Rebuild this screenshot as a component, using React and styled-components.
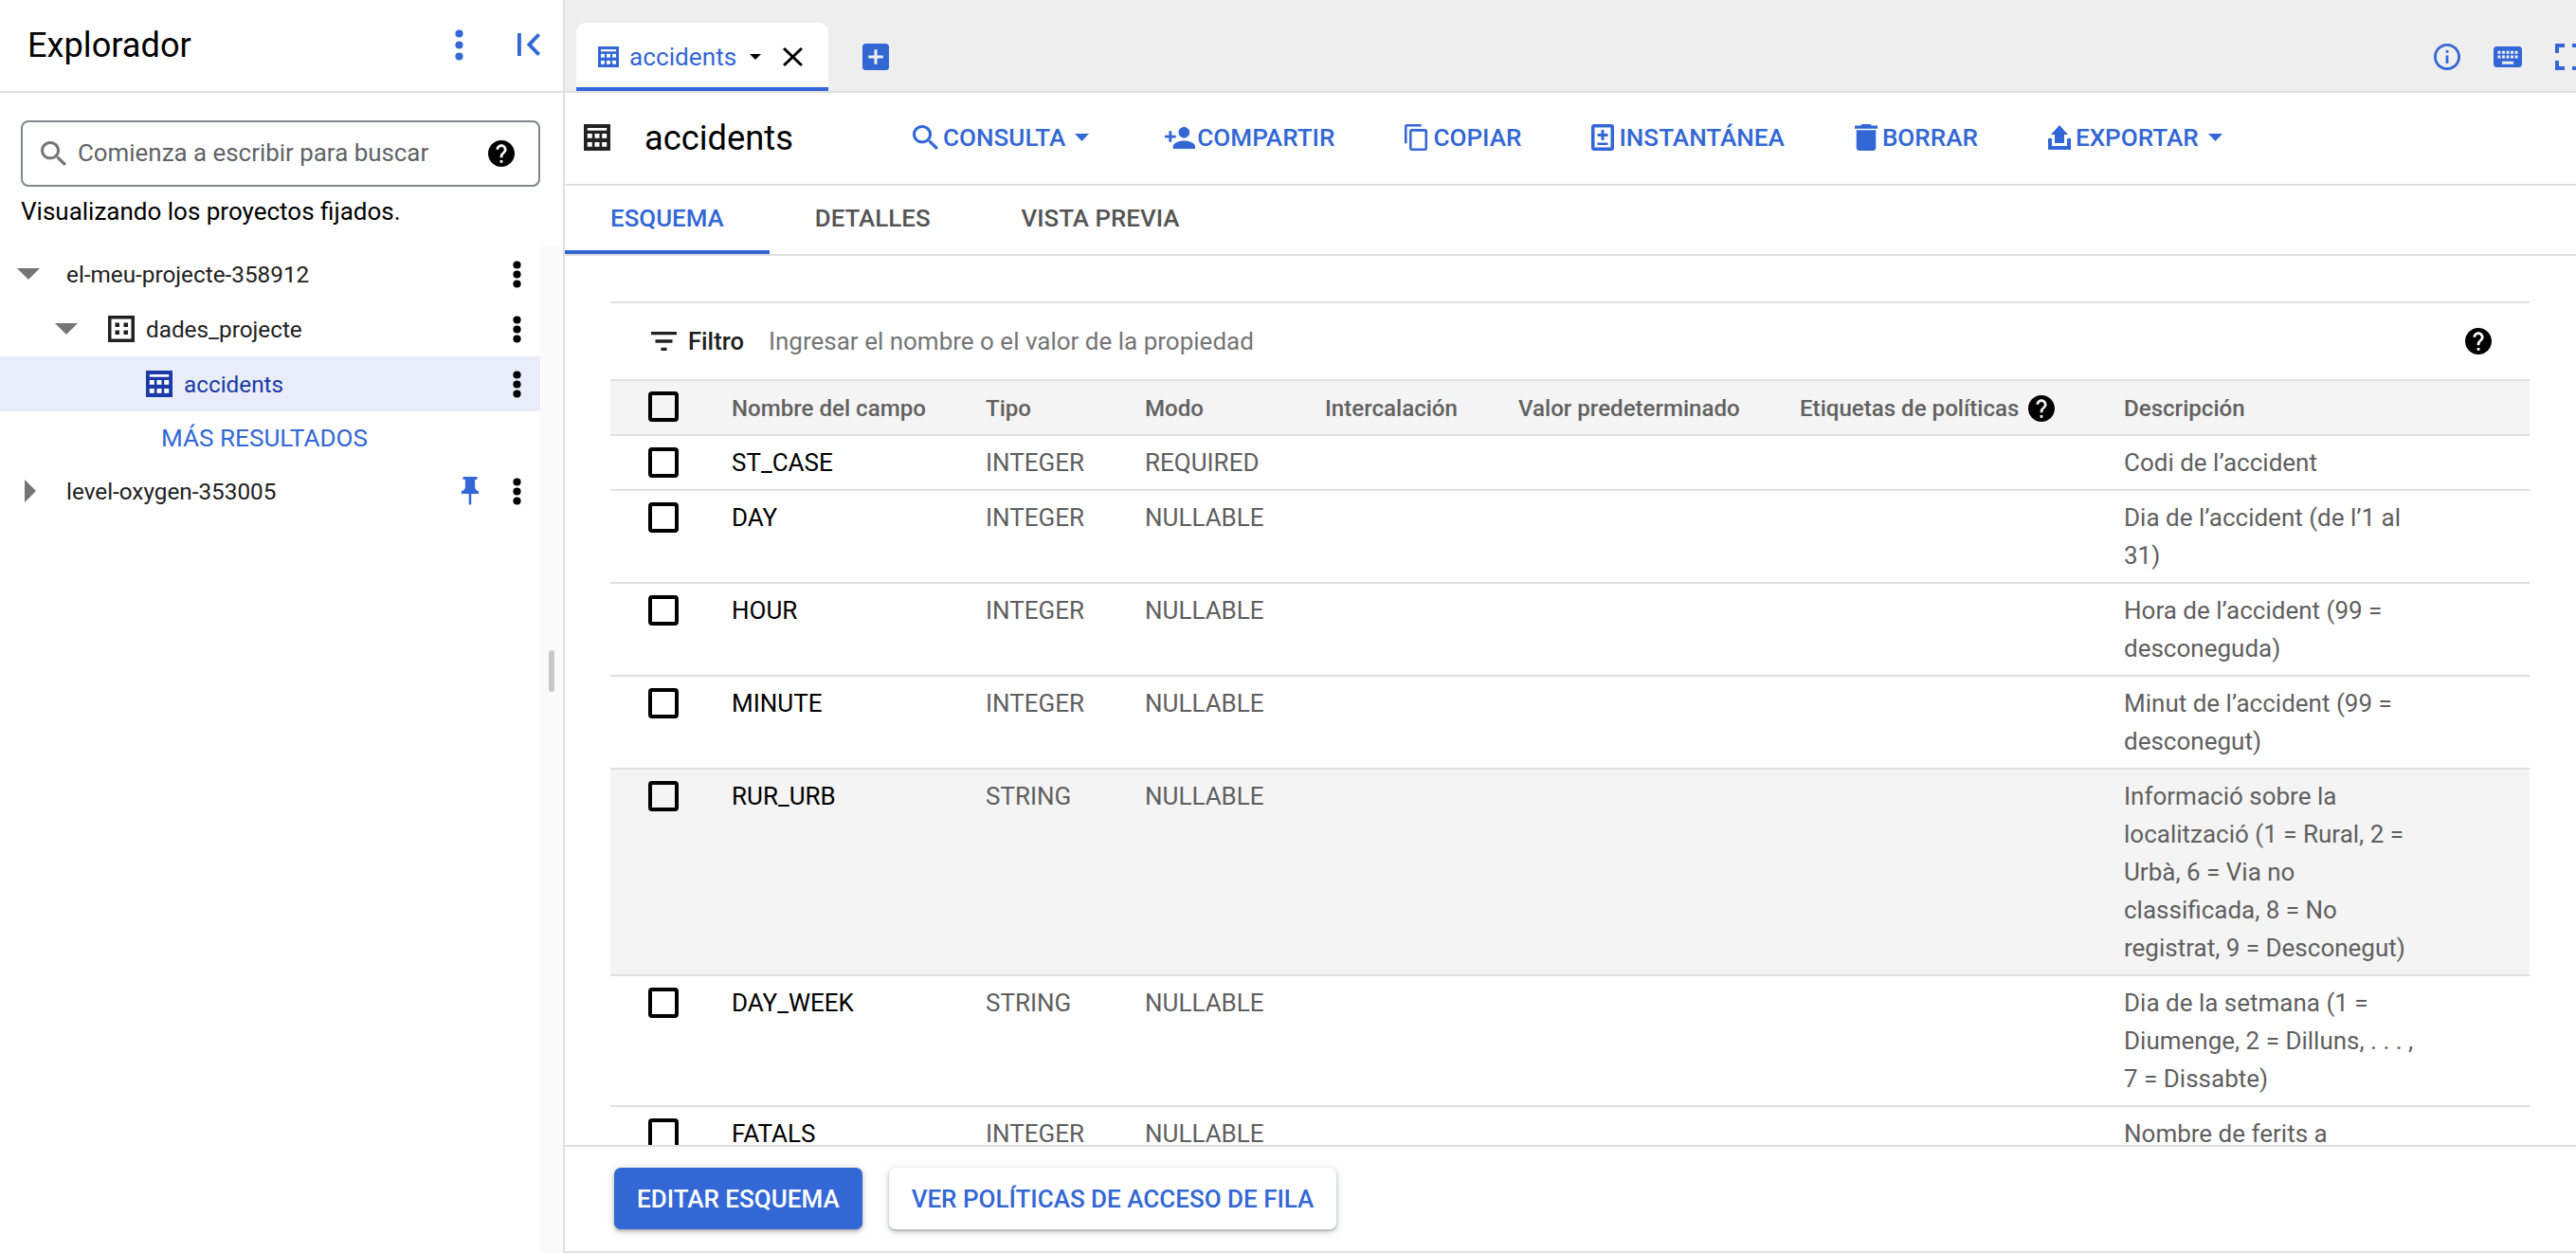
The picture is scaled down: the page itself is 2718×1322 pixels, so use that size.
import React from "react";
import styled, { createGlobalStyle } from "styled-components";

const BLUE = "#3367d6";
const LINE = "#e0e0e0";

const GlobalStyle = createGlobalStyle`
  html, body {
    margin: 0;
    padding: 0;
    overflow: hidden;
    background: #fff;
    font-family: Roboto, "Noto Sans", sans-serif;
  }
  * { box-sizing: border-box; }
`;

const Page = styled.div`
  display: flex;
  width: 2718px;
  height: 1322px;
  overflow: hidden;
  color: #212121;
`;

/* ---------- icons ---------- */

const PATHS = {
  search: ["3 3 17.49 17.49", "M15.5 14h-.79l-.28-.27C15.41 12.59 16 11.11 16 9.5 16 5.91 13.09 3 9.5 3S3 5.91 3 9.5 5.91 16 9.5 16c1.61 0 3.09-.59 4.23-1.57l.27.28v.79l5 4.99L20.49 19l-4.99-5zm-6 0C7.01 14 5 11.99 5 9.5S7.01 5 9.5 5 14 7.01 14 9.5 11.99 14 9.5 14z"],
  help: ["2 2 20 20", "M12 2C6.48 2 2 6.48 2 12s4.48 10 10 10 10-4.48 10-10S17.52 2 12 2zm1 17h-2v-2h2v2zm2.07-7.75l-.9.92C13.45 12.9 13 13.5 13 15h-2v-.5c0-1.1.45-2.1 1.17-2.83l1.24-1.26c.37-.36.59-.86.59-1.41 0-1.1-.9-2-2-2s-2 .9-2 2H8c0-2.21 1.79-4 4-4s4 1.79 4 4c0 .88-.36 1.68-.93 2.25z"],
  personAdd: ["1 4 22 16", "M15 12c2.21 0 4-1.79 4-4s-1.79-4-4-4-4 1.79-4 4 1.79 4 4 4zm-9-2V7H4v3H1v2h3v3h2v-3h3v-2H6zm9 4c-2.67 0-8 1.34-8 4v2h16v-2c0-2.66-5.33-4-8-4z"],
  copy: ["2 1 19 22", "M16 1H4c-1.1 0-2 .9-2 2v14h2V3h12V1zm3 4H8c-1.1 0-2 .9-2 2v14c0 1.1.9 2 2 2h11c1.1 0 2-.9 2-2V7c0-1.1-.9-2-2-2zm0 16H8V7h11v14z"],
  trash: ["5 3 14 18", "M6 19c0 1.1.9 2 2 2h8c1.1 0 2-.9 2-2V7H6v12zM19 4h-3.5l-1-1h-5l-1 1H5v2h14V4z"],
  snapshot: ["0 0 24 28", "M3 0h18a3 3 0 0 1 3 3v22a3 3 0 0 1-3 3H3a3 3 0 0 1-3-3V3a3 3 0 0 1 3-3zm.5 3.5v21h17v-21h-17zM10.5 6h3v4h4v3h-4v4h-3v-4h-4v-3h4V6zM6.500 19.500h11v2.500h-11v-2.500z"],
  exportIt: ["0 0 24 26", "M12 0l9 10h-4v9H7v-9H3L12 0zM0 14h4v8h16v-8h4v12H0V14z"],
  filter: ["3 6 18 12", "M10 18h4v-2h-4v2zM3 6v2h18V6H3zm3 7h12v-2H6v2z"],
  close: ["5 5 14 14", "M19 6.41L17.59 5 12 10.59 6.41 5 5 6.41 10.59 12 5 17.59 6.41 19 12 13.41 17.59 19 19 17.59 13.41 12z"],
  info: ["2 2 20 20", "M11 7h2v2h-2zm0 4h2v6h-2zm1-9C6.48 2 2 6.48 2 12s4.48 10 10 10 10-4.48 10-10S17.52 2 12 2zm0 18c-4.41 0-8-3.59-8-8s3.59-8 8-8 8 3.59 8 8-3.59 8-8 8z"],
  keyboard: ["2 5 20 14", "M20 5H4c-1.1 0-1.99.9-1.99 2L2 17c0 1.1.9 2 2 2h16c1.100 0 2-.9 2-2V7c0-1.100-.9-2-2-2zm-9 3h2v2h-2V8zm0 3h2v2h-2v-2zM8 8h2v2H8V8zm0 3h2v2H8v-2zm-1 2H5v-2h2v2zm0-3H5V8h2v2zm9 7H8v-2h8v2zm0-4h-2v-2h2v2zm0-3h-2V8h2v2zm3 3h-2v-2h2v2zm0-3h-2V8h2v2z"],
  fullscreen: ["5 5 14 14", "M7 14H5v5h5v-2H7v-3zm-2-4h2V7h3V5H5v5zm12 7h-3v2h5v-5h-2v3zM14 5v2h3v3h2V5h-5z"],
  pin: ["5 2 14 20", "M16 9V4h1c.55 0 1-.45 1-1s-.45-1-1-1H7c-.55 0-1 .45-1 1s.45 1 1 1h1v5c0 1.66-1.34 3-3 3v2h5.970v7l1 1 1-1v-7H19v-2c-1.66 0-3-1.34-3-3z"],
  addBox: ["3 3 18 18", "M19 3H5c-1.110 0-2 .9-2 2v14c0 1.1.89 2 2 2h14c1.1 0 2-.9 2-2V5c0-1.1-.9-2-2-2zm-2 10h-4v4h-2v-4H7v-2h4V7h2v4h4v2z"],
  firstPage: ["6 6 12.41 12", "M18.41 16.59L13.82 12l4.59-4.59L17 6l-6 6 6 6zM6 6h2v12H6z"],
};

const Svg = styled.svg`
  display: block;
  flex: none;
  fill: ${(p) => p.$color || "currentColor"};
`;

const Glyph = ({ name, w, h, color }) => (
  <Svg viewBox={PATHS[name][0]} width={w} height={h} preserveAspectRatio="none" $color={color}>
    <path d={PATHS[name][1]} />
  </Svg>
);

const TableIcon = ({ size = 28, color }) => (
  <Svg viewBox="0 0 28 28" width={size} height={size} $color={color}>
    <rect width="28" height="28" />
    <g fill="#fff">
      <rect x="3.800" y="4" width="20.400" height="2.700" />
      <rect x="3.800" y="10" width="5" height="4.800" />
      <rect x="11.500" y="10" width="5" height="4.800" />
      <rect x="19.200" y="10" width="5" height="4.800" />
      <rect x="3.800" y="19" width="5" height="4.800" />
      <rect x="11.500" y="19" width="5" height="4.800" />
      <rect x="19.200" y="19" width="5" height="4.800" />
    </g>
  </Svg>
);

const DatasetIcon = () => (
  <Svg viewBox="0 0 28 28" width="28" height="28" $color="#212121">
    <path fillRule="evenodd" d="M0 0h28v28H0zM3.500 3.500v21h21v-21z" />
    <rect x="7.500" y="7.500" width="4.500" height="4.500" />
    <rect x="16.500" y="7.500" width="4.500" height="4.500" />
    <rect x="7.500" y="15.500" width="4.500" height="4.500" />
    <rect x="16.500" y="15.500" width="4.500" height="4.500" />
  </Svg>
);

const Dots = ({ gap = 10, color = "#000" }) => (
  <Svg viewBox={`0 0 9 ${gap * 2 + 9}`} width="9" height={gap * 2 + 9} $color={color}>
    <circle cx="4.500" cy="4.500" r="4.100" />
    <circle cx="4.500" cy={4.5 + gap} r="4.100" />
    <circle cx="4.500" cy={4.5 + gap * 2} r="4.100" />
  </Svg>
);

const Caret = ({ w = 15, h = 8, color }) => (
  <Svg viewBox="0 0 10 5" width={w} height={h} preserveAspectRatio="none" $color={color}>
    <path d="M0 0h10L5 5z" />
  </Svg>
);

const ArrowDown = () => (
  <Svg viewBox="0 0 10 5" width="24" height="12" preserveAspectRatio="none" $color="#757575">
    <path d="M0 0h10L5 5z" />
  </Svg>
);

const ArrowRight = () => (
  <Svg viewBox="0 0 5 10" width="12" height="24" preserveAspectRatio="none" $color="#757575">
    <path d="M0 0v10l5-5z" />
  </Svg>
);

/* ---------- explorer ---------- */

const Sidebar = styled.aside`
  display: flex;
  flex-direction: column;
  flex: none;
  width: 596px;
  border-right: 2px solid ${LINE};
`;

const SideHeader = styled.header`
  display: flex;
  align-items: center;
  flex: none;
  height: 98px;
  padding: 0 24px 2px 29px;
  border-bottom: 2px solid ${LINE};
`;

const SideTitle = styled.h1`
  flex: 1;
  margin: 0;
  font-size: 36.200px;
  font-weight: 400;
  color: #000;
`;

const HeaderDots = styled.span`
  margin-right: 57px;
`;

const SearchBlock = styled.div`
  flex: none;
  width: 570px;
  height: 162px;
  padding: 29px 0 0 22px;
`;

const SearchBox = styled.div`
  display: flex;
  align-items: center;
  width: 548px;
  height: 70px;
  padding: 0 25px 0 19px;
  border: 2px solid #80868b;
  border-radius: 8px;
  color: #757575;
`;

const SearchText = styled.span`
  flex: 1;
  margin-left: 12px;
  padding-bottom: 2px;
  font-size: 25.900px;
  color: #5f6368;
`;

const PinnedNote = styled.p`
  margin: 11px 0 0;
  font-size: 26px;
  line-height: 30px;
  color: #000;
`;

const TreeArea = styled.div`
  display: flex;
  flex: 1;
  min-height: 0;
`;

const Tree = styled.ul`
  flex: none;
  width: 570px;
  margin: 0;
  padding: 0;
  list-style: none;
`;

const TreeRow = styled.li`
  display: flex;
  align-items: center;
  height: ${(p) => p.$h || 58}px;
  padding: 0 20px 0 ${(p) => p.$indent}px;
  background: ${(p) => (p.$selected ? "#e8edf9" : "transparent")};
  color: ${(p) => (p.$selected ? "#1a3aa8" : "#212121")};
  font-size: 24.300px;
`;

const ArrowSlot = styled.span`
  display: flex;
  flex: none;
  width: ${(p) => p.$w}px;
  padding-left: ${(p) => p.$pad || 0}px;
`;

const TreeLabel = styled.span`
  margin-left: ${(p) => p.$gap || 0}px;
`;

const MoreLink = styled.span`
  color: ${BLUE};
  font-size: 26.100px;
`;

const RowTools = styled.span`
  display: flex;
  align-items: center;
  gap: 36px;
  margin-left: auto;
`;

const ResizeStrip = styled.div`
  flex: 1;
  display: flex;
  justify-content: center;
  padding-top: 426px;
  background: #fafafa;
`;

const ResizeHandle = styled.span`
  display: block;
  width: 6px;
  height: 44px;
  border-radius: 3px;
  background: #c8c8c8;
`;

/* ---------- main panel ---------- */

const Main = styled.main`
  display: flex;
  flex-direction: column;
  flex: 1;
  min-width: 0;
`;

const TabBar = styled.div`
  display: flex;
  align-items: flex-start;
  flex: none;
  height: 98px;
  padding: 24px 0 0 12px;
  background: #eeeeee;
  border-bottom: 2px solid ${LINE};
`;

const OpenTab = styled.div`
  display: flex;
  align-items: center;
  width: 266px;
  height: 72px;
  padding: 3px 0 0 23px;
  background: #fff;
  border-bottom: 4px solid ${BLUE};
  border-radius: 10px 10px 0 0;
  color: ${BLUE};
  font-size: 26.200px;
`;

const OpenTabLabel = styled.span`
  margin: 0 14px 0 11px;
`;

const CloseSlot = styled.span`
  margin-left: 23px;
  color: #000;
`;

const AddSlot = styled.span`
  margin: 22px 0 0 36px;
`;

const TopIcons = styled.div`
  display: flex;
  align-items: center;
  gap: 35px;
  height: 28px;
  margin: 22px -6px 0 auto;
  color: ${BLUE};
`;

const Toolbar = styled.div`
  display: flex;
  align-items: center;
  flex: none;
  height: 98px;
  padding: 0 0 2px 20px;
  border-bottom: 2px solid ${LINE};
`;

const ToolbarTitle = styled.h2`
  flex: none;
  width: 283px;
  margin: 0 0 0 36px;
  font-size: 36.300px;
  font-weight: 400;
  color: #000;
`;

const ActionList = styled.div`
  display: flex;
  align-items: center;
  gap: 74px;
`;

const Action = styled.span`
  display: flex;
  align-items: center;
  gap: ${(p) => p.$gap || 6}px;
  color: ${BLUE};
  font-size: 26.100px;
  font-weight: 500;
`;

const CaretSlot = styled.span`
  margin: 0 6px 0 5px;
`;

const SubTabs = styled.div`
  display: flex;
  flex: none;
  height: 74px;
  border-bottom: 2px solid ${LINE};
`;

const SubTab = styled.span`
  display: flex;
  align-items: center;
  height: 72px;
  padding: 0 48px;
  border-bottom: 4px solid ${(p) => (p.$active ? BLUE : "transparent")};
  color: ${(p) => (p.$active ? BLUE : "#555")};
  font-size: 25.900px;
  font-weight: 500;
`;

const Content = styled.div`
  flex: 1;
  min-height: 0;
  overflow: hidden;
  padding: 48px 49px 0 48px;
`;

const FilterBar = styled.div`
  display: flex;
  align-items: center;
  height: 82px;
  padding: 0 40px 0 43px;
  border-top: 2px solid ${LINE};
`;

const FilterLabel = styled.span`
  margin: 0 26px 0 12px;
  font-size: 25.600px;
  font-weight: 500;
  color: #212121;
`;

const FilterHint = styled.span`
  flex: 1;
  font-size: 26px;
  color: #757575;
`;

const Row = styled.div`
  display: grid;
  grid-template-columns: 128px 268px 168px 190px 204px 297px 342px 1fr;
  min-height: 58px;
  padding: 8px 0;
  border-bottom: 2px solid ${LINE};
  background: ${(p) => (p.$shaded ? "#f4f4f4" : "transparent")};
  font-size: 26px;
  line-height: 40px;
  color: #5f5f5f;
`;

const HeadRow = styled(Row)`
  min-height: 60px;
  padding: 7px 0 7px;
  border-top: 2px solid ${LINE};
  background: #f4f4f4;
  font-size: 24.100px;
  font-weight: 500;
  color: #616161;
`;

const CheckCell = styled.div`
  padding: 4px 0 0 40px;
`;

const CheckBox = styled.span`
  display: block;
  width: 32px;
  height: 32px;
  border: 4px solid #000;
  border-radius: 4px;
`;

const FieldName = styled.div`
  color: #000;
`;

const HeadCell = styled.div`
  display: flex;
  align-items: center;
  gap: 10px;
  height: 40px;
  padding-top: 4px;
  color: #616161;
`;

const Description = styled.div`
  max-width: 320px;
`;

const BottomBar = styled.div`
  display: flex;
  align-items: flex-start;
  gap: 28px;
  flex: none;
  height: 114px;
  padding: 22px 0 0 52px;
  border-top: 2px solid ${LINE};
  border-bottom: 2px solid ${LINE};
`;

const ActionButton = styled.button`
  height: 65px;
  padding: 0 24px;
  border: 0;
  border-radius: 7px;
  background: ${(p) => (p.$primary ? BLUE : "#fff")};
  color: ${(p) => (p.$primary ? "#fff" : BLUE)};
  box-shadow: 0 2px 3px rgba(60, 64, 67, 0.3), 0 2px 6px 2px rgba(60, 64, 67, 0.15);
  font-family: inherit;
  font-size: 26px;
  font-weight: 500;
`;

const FIELDS = [
  ["ST_CASE", "INTEGER", "REQUIRED", "Codi de l’accident"],
  ["DAY", "INTEGER", "NULLABLE", "Dia de l’accident (de l’1 al 31)"],
  ["HOUR", "INTEGER", "NULLABLE", "Hora de l’accident (99 = desconeguda)"],
  ["MINUTE", "INTEGER", "NULLABLE", "Minut de l’accident (99 = desconegut)"],
  ["RUR_URB", "STRING", "NULLABLE", "Informació sobre la localització (1 = Rural, 2 = Urbà, 6 = Via no classificada, 8 = No registrat, 9 = Desconegut)", true],
  ["DAY_WEEK", "STRING", "NULLABLE", "Dia de la setmana (1 = Diumenge, 2 = Dilluns, . . . , 7 = Dissabte)"],
  ["FATALS", "INTEGER", "NULLABLE", "Nombre de ferits a l’accident"],
];

export default function App() {
  return (
    <Page>
      <GlobalStyle />
      <Sidebar>
        <SideHeader>
          <SideTitle>Explorador</SideTitle>
          <HeaderDots>
            <Dots gap={12} color={BLUE} />
          </HeaderDots>
          <Glyph name="firstPage" w={24} h={24} color={BLUE} />
        </SideHeader>
        <SearchBlock>
          <SearchBox>
            <Glyph name="search" w={27} h={26} />
            <SearchText>Comienza a escribir para buscar</SearchText>
            <Glyph name="help" w={28} h={28} color="#000" />
          </SearchBox>
          <PinnedNote>Visualizando los proyectos fijados.</PinnedNote>
        </SearchBlock>
        <TreeArea>
          <Tree>
            <TreeRow $indent={18}>
              <ArrowSlot $w={52}><ArrowDown /></ArrowSlot>
              <TreeLabel>el-meu-projecte-358912</TreeLabel>
              <RowTools><Dots /></RowTools>
            </TreeRow>
            <TreeRow $indent={58}>
              <ArrowSlot $w={56}><ArrowDown /></ArrowSlot>
              <DatasetIcon />
              <TreeLabel $gap={12}>dades_projecte</TreeLabel>
              <RowTools><Dots /></RowTools>
            </TreeRow>
            <TreeRow $indent={154} $selected>
              <TableIcon color="#1a3aa8" />
              <TreeLabel $gap={12}>accidents</TreeLabel>
              <RowTools><Dots /></RowTools>
            </TreeRow>
            <TreeRow $indent={170} $h={55}>
              <MoreLink>MÁS RESULTADOS</MoreLink>
            </TreeRow>
            <TreeRow $indent={18}>
              <ArrowSlot $w={52} $pad={8}><ArrowRight /></ArrowSlot>
              <TreeLabel>level-oxygen-353005</TreeLabel>
              <RowTools>
                <Glyph name="pin" w={18} h={30} color={BLUE} />
                <Dots />
              </RowTools>
            </TreeRow>
          </Tree>
          <ResizeStrip>
            <ResizeHandle />
          </ResizeStrip>
        </TreeArea>
      </Sidebar>

      <Main>
        <TabBar>
          <OpenTab>
            <TableIcon size={22} color={BLUE} />
            <OpenTabLabel>accidents</OpenTabLabel>
            <Caret w={12} h={6} color="#000" />
            <CloseSlot><Glyph name="close" w={21} h={20} /></CloseSlot>
          </OpenTab>
          <AddSlot><Glyph name="addBox" w={28} h={28} color={BLUE} /></AddSlot>
          <TopIcons>
            <Glyph name="info" w={28} h={28} />
            <Glyph name="keyboard" w={30} h={22} />
            <Glyph name="fullscreen" w={28} h={28} />
          </TopIcons>
        </TabBar>

        <Toolbar>
          <TableIcon color="#212121" />
          <ToolbarTitle>accidents</ToolbarTitle>
          <ActionList>
            <Action $gap={5}>
              <Glyph name="search" w={27} h={26} />
              CONSULTA
              <CaretSlot><Caret /></CaretSlot>
            </Action>
            <Action $gap={2}>
              <Glyph name="personAdd" w={32} h={23} />
              COMPARTIR
            </Action>
            <Action $gap={6}>
              <Glyph name="copy" w={24} h={28} />
              COPIAR
            </Action>
            <Action $gap={5}>
              <Glyph name="snapshot" w={24} h={28} />
              INSTANTÁNEA
            </Action>
            <Action $gap={5}>
              <Glyph name="trash" w={24} h={28} />
              BORRAR
            </Action>
            <Action $gap={5}>
              <Glyph name="exportIt" w={24} h={26} />
              EXPORTAR
              <CaretSlot><Caret /></CaretSlot>
            </Action>
          </ActionList>
        </Toolbar>

        <SubTabs>
          <SubTab $active>ESQUEMA</SubTab>
          <SubTab>DETALLES</SubTab>
          <SubTab>VISTA PREVIA</SubTab>
        </SubTabs>

        <Content>
          <FilterBar>
            <Glyph name="filter" w={27} h={20} color="#212121" />
            <FilterLabel>Filtro</FilterLabel>
            <FilterHint>Ingresar el nombre o el valor de la propiedad</FilterHint>
            <Glyph name="help" w={28} h={28} color="#000" />
          </FilterBar>
          <HeadRow>
            <CheckCell><CheckBox /></CheckCell>
            <HeadCell>Nombre del campo</HeadCell>
            <HeadCell>Tipo</HeadCell>
            <HeadCell>Modo</HeadCell>
            <HeadCell>Intercalación</HeadCell>
            <HeadCell>Valor predeterminado</HeadCell>
            <HeadCell>
              Etiquetas de políticas
              <Glyph name="help" w={28} h={28} color="#000" />
            </HeadCell>
            <HeadCell>Descripción</HeadCell>
          </HeadRow>
          {FIELDS.map(([name, type, mode, text, shaded]) => (
            <Row key={name} $shaded={shaded}>
              <CheckCell><CheckBox /></CheckCell>
              <FieldName>{name}</FieldName>
              <div>{type}</div>
              <div>{mode}</div>
              <div />
              <div />
              <div />
              <Description>{text}</Description>
            </Row>
          ))}
        </Content>

        <BottomBar>
          <ActionButton $primary>EDITAR ESQUEMA</ActionButton>
          <ActionButton>VER POLÍTICAS DE ACCESO DE FILA</ActionButton>
        </BottomBar>
      </Main>
    </Page>
  );
}
